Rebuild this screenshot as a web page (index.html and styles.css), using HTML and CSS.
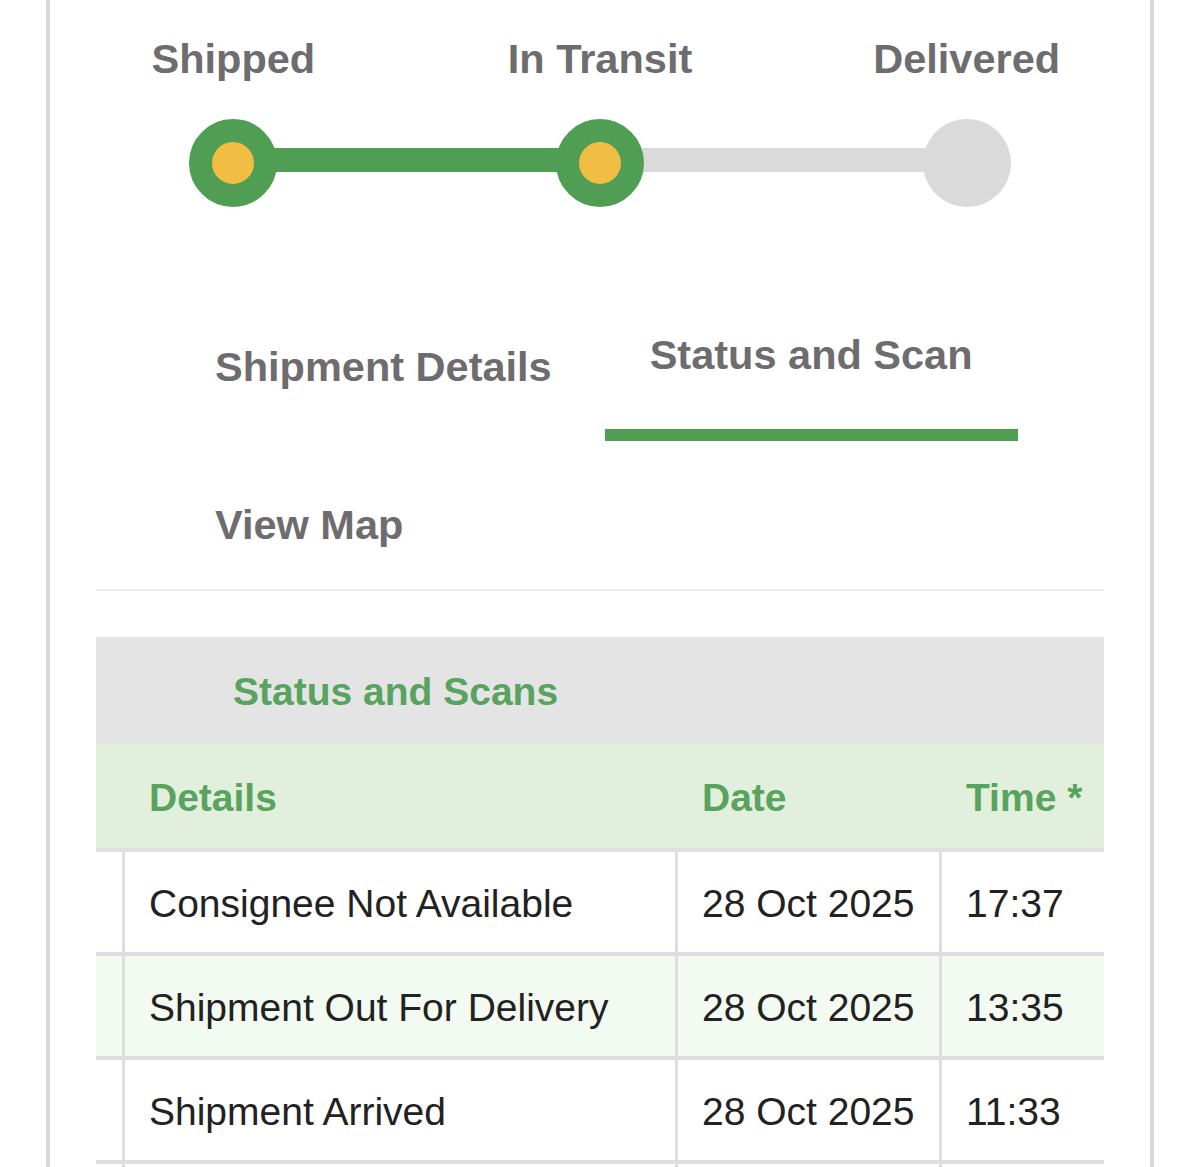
FILE: index.html
```html
<!DOCTYPE html>
<html lang="en">
<head>
  <meta charset="UTF-8" />
  <meta name="viewport" content="width=device-width, initial-scale=1" />
  <title>Track Shipment</title>
  <link rel="stylesheet" href="styles.css">
</head>
<body>
  <div class="card">
    <ol class="stepper">
      <li class="step done">
        <span class="step-label">Shipped</span>
        <span class="step-dot"></span>
      </li>
      <li class="step current">
        <span class="step-label">In Transit</span>
        <span class="step-dot"></span>
      </li>
      <li class="step">
        <span class="step-label">Delivered</span>
        <span class="step-dot"></span>
      </li>
    </ol>

    <nav class="tabs">
      <a class="tab" href="#">Shipment Details</a>
      <a class="tab active" href="#">Status and Scan</a>
      <a class="tab" href="#">View Map</a>
    </nav>

    <table class="scans">
      <colgroup>
        <col class="col-gutter">
        <col class="col-details">
        <col class="col-date">
        <col class="col-time">
      </colgroup>
      <thead>
        <tr>
          <th class="scans-title" colspan="4">Status and Scans</th>
        </tr>
        <tr class="col-heads">
          <th></th>
          <th>Details</th>
          <th>Date</th>
          <th>Time *</th>
        </tr>
      </thead>
      <tbody>
        <tr>
          <td></td>
          <td>Consignee Not Available</td>
          <td>28 Oct 2025</td>
          <td>17:37</td>
        </tr>
        <tr class="alt">
          <td></td>
          <td>Shipment Out For Delivery</td>
          <td>28 Oct 2025</td>
          <td>13:35</td>
        </tr>
        <tr>
          <td></td>
          <td>Shipment Arrived</td>
          <td>28 Oct 2025</td>
          <td>11:33</td>
        </tr>
        <tr>
          <td></td>
          <td></td>
          <td></td>
          <td></td>
        </tr>
      </tbody>
    </table>
  </div>
</body>
</html>
```

FILE: styles.css
```css
body {
  margin: 0;
  background: #fff;
  font-family: "Liberation Sans", Arial, Helvetica, sans-serif;
}
.card {
  margin-left: 46px;
  width: 1100px;
  min-height: 1300px;
  background: white;
  border-left: 4px solid #d9d9d9;
  border-right: 4px solid #d9d9d9;
}

/* progress steps */
.stepper {
  list-style: none;
  margin: 0;
  padding: 35px 0 84px;
  display: grid;
  grid-template-columns: repeat(3, 1fr);
}
.step {
  position: relative;
  display: flex;
  flex-direction: column;
  align-items: center;
  gap: 36px;
}
.step-label {
  font-size: 41.5px;
  line-height: 48px;
  font-weight: bold;
  color: #6e6c6f;
}
.step-dot {
  position: relative;
  z-index: 1;
  box-sizing: border-box;
  width: 88px;
  height: 88px;
  border-radius: 50%;
  background: #dadada;
}
.step.done .step-dot,
.step.current .step-dot {
  background: #f1bd42;
  border: 23px solid #4f9e54;
}
.step.done::after,
.step.current::after {
  content: '';
  position: absolute;
  top: 113px;
  left: 50%;
  width: 100%;
  height: 24px;
  background: #dadada;
}
.step.done::after {
  background: #4f9e54;
}

/* tabs */
.tabs {
  display: flex;
  flex-wrap: wrap;
  align-items: flex-start;
  column-gap: 8px;
  row-gap: 8px;
  margin: 0 46px;
  padding-left: 74px;
  border-bottom: 2px solid #ececec;
}
.tab {
  padding: 52px 45px 40px;
  font-size: 41.5px;
  line-height: 48px;
  font-weight: bold;
  color: #6e6c6f;
  text-decoration: none;
}
.tab.active {
  padding: 40px 45px 50px;
  border-bottom: 12px solid #4f9e54;
}

/* status table */
.scans {
  margin: 46px 46px 0;
  width: 1008px;
  table-layout: fixed;
  border-collapse: separate;
  border-spacing: 0;
  font-size: 39px;
  line-height: 46px;
}
.col-gutter { width: 26px; }
.col-details { width: 553px; }
.col-date { width: 264px; }
.col-time { width: 165px; }

.scans th {
  text-align: left;
  font-weight: bold;
  color: #58a35e;
}
.scans-title {
  background: #e4e4e5;
  padding: 32px 0 29px 137px;
}
.col-heads th {
  background: #e2efdc;
  padding: 31px 0 27px 27px;
  border-bottom: 4px solid #dde0df;
  white-space: nowrap;
}
.col-heads th:first-child {
  padding: 0;
}
.scans td {
  height: 46px;
  padding: 29px 0 25px 24px;
  color: #222;
  white-space: nowrap;
  border-left: 3px solid #dedede;
  border-bottom: 4px solid #dedede;
}
.scans td:first-child {
  padding: 0;
  border-left: none;
}
.scans tr.alt td {
  background: #f3faf1;
}
```
